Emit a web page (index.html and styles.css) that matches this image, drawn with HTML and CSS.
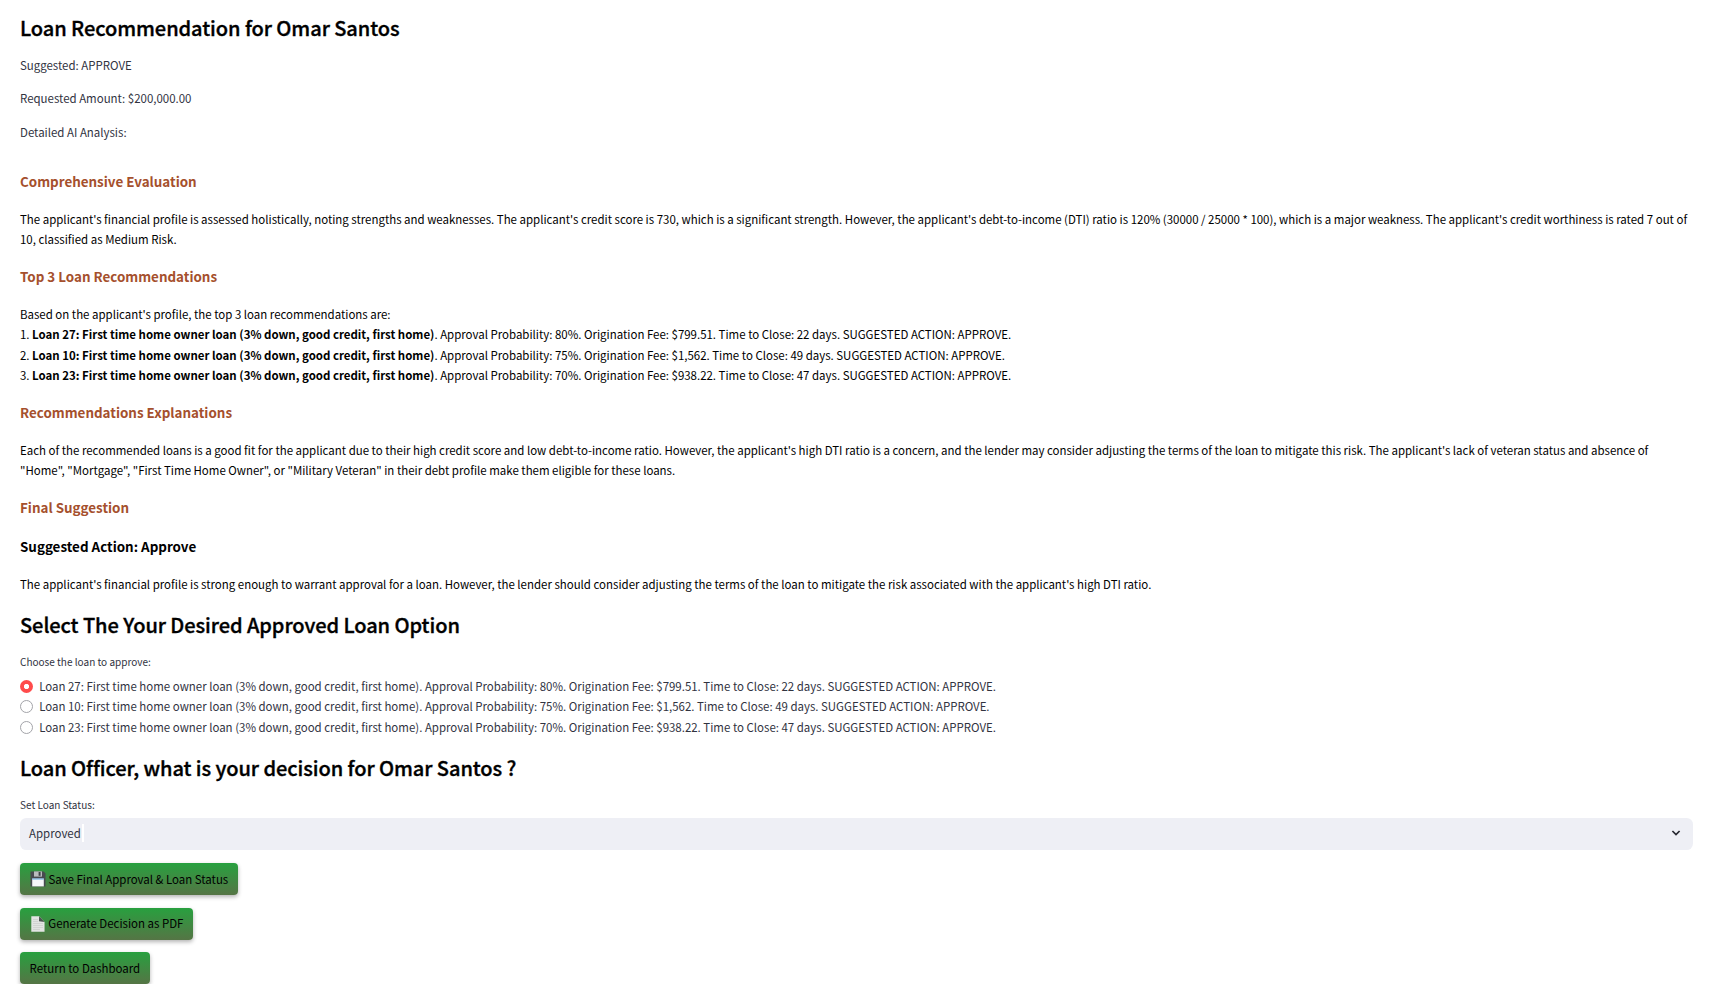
FILE: index.html
```html
<!DOCTYPE html>
<html lang="en">
<head>
<meta charset="utf-8">
<title>Loan Recommendation</title>
<link rel="stylesheet" href="styles.css">
</head>
<body>
<main class="page">
  <h2 class="title">Loan Recommendation for Omar Santos</h2>
  <div class="summary">
    <p>Suggested: APPROVE</p>
    <p>Requested Amount: $200,000.00</p>
    <p>Detailed AI Analysis:</p>
  </div>

  <section class="analysis">
    <h3 class="accent">Comprehensive Evaluation</h3>
    <p>The applicant's financial profile is assessed holistically, noting strengths and weaknesses. The applicant's credit score is 730, which is a significant strength. However, the applicant's debt-to-income (DTI) ratio is 120% (30000 / 25000 * 100), which is a major weakness. The applicant's credit worthiness is rated 7 out of 10, classified as Medium Risk.</p>
    <h3 class="accent">Top 3 Loan Recommendations</h3>
    <p>Based on the applicant's profile, the top 3 loan recommendations are:<br>
      1. <b>Loan 27: First time home owner loan (3% down, good credit, first home)</b>. Approval Probability: 80%. Origination Fee: $799.51. Time to Close: 22 days. SUGGESTED ACTION: APPROVE.<br>
      2. <b>Loan 10: First time home owner loan (3% down, good credit, first home)</b>. Approval Probability: 75%. Origination Fee: $1,562. Time to Close: 49 days. SUGGESTED ACTION: APPROVE.<br>
      3. <b>Loan 23: First time home owner loan (3% down, good credit, first home)</b>. Approval Probability: 70%. Origination Fee: $938.22. Time to Close: 47 days. SUGGESTED ACTION: APPROVE.</p>
    <h3 class="accent">Recommendations Explanations</h3>
    <p>Each of the recommended loans is a good fit for the applicant due to their high credit score and low debt-to-income ratio. However, the applicant's high DTI ratio is a concern, and the lender may consider adjusting the terms of the loan to mitigate this risk. The applicant's lack of veteran status and absence of "Home", "Mortgage", "First Time Home Owner", or "Military Veteran" in their debt profile make them eligible for these loans.</p>
    <h3 class="accent">Final Suggestion</h3>
    <h3>Suggested Action: Approve</h3>
    <p>The applicant's financial profile is strong enough to warrant approval for a loan. However, the lender should consider adjusting the terms of the loan to mitigate the risk associated with the applicant's high DTI ratio.</p>
  </section>

  <h2 class="title">Select The Your Desired Approved Loan Option</h2>
  <div class="label">Choose the loan to approve:</div>
  <div class="radios">
    <div class="radio"><span class="dot dot-on"></span>Loan 27: First time home owner loan (3% down, good credit, first home). Approval Probability: 80%. Origination Fee: $799.51. Time to Close: 22 days. SUGGESTED ACTION: APPROVE.</div>
    <div class="radio"><span class="dot"></span>Loan 10: First time home owner loan (3% down, good credit, first home). Approval Probability: 75%. Origination Fee: $1,562. Time to Close: 49 days. SUGGESTED ACTION: APPROVE.</div>
    <div class="radio"><span class="dot"></span>Loan 23: First time home owner loan (3% down, good credit, first home). Approval Probability: 70%. Origination Fee: $938.22. Time to Close: 47 days. SUGGESTED ACTION: APPROVE.</div>
  </div>

  <h2 class="title">Loan Officer, what is your decision for Omar Santos ?</h2>
  <div class="label">Set Loan Status:</div>
  <div class="select">
    <span>Approved</span><i class="input"></i>
    <svg class="chevron" width="10" height="6" viewBox="0 0 10 6"><path d="M1.4 1 5 4.6 8.6 1" fill="none" stroke="#262730" stroke-width="1.7"/></svg>
  </div>

  <div class="buttons">
    <button class="btn save">
      <svg class="icon" width="16" height="16" viewBox="0 0 16 16">
        <path d="M.8.4H13.6L15.5 2.3V15.6H.5V.7Z" fill="#484b50"/>
        <path d="M4 .4H12V5.6H4Z" fill="#b9bcbe"/>
        <path d="M8.6 1H10.6V4.8H8.6Z" fill="#3f4347"/>
        <path d="M2.2 7.6H13.8V15.4H2.2Z" fill="#f5f7f8"/>
        <path d="M2.2 7.4H13.8V8.6H2.2Z" fill="#79b4e2"/>
      </svg>Save Final Approval &amp; Loan Status
    </button>
    <button class="btn pdf">
      <svg class="icon" width="16" height="16" viewBox="0 0 16 16">
        <path d="M1.3.3H9.2L14.6 5.9V15.7H1.3Z" fill="#e3e4e3"/>
        <path d="M3 3.5H8M3 5.5H8M3 7.5H13M3 9.5H13M3 11.5H13M3 13.5H10" stroke="#c9cbc9" stroke-width=".7"/>
        <path d="M9.2.3 14.6 5.9 9 5.3Z" fill="#4c5350"/>
      </svg>Generate Decision as PDF
    </button>
    <button class="btn back">Return to Dashboard</button>
  </div>
</main>
</body>
</html>
```
FILE: styles.css
```css
* { box-sizing: border-box; }
body {
  margin: 0;
  background: #fff;
  color: #31333f;
  font: 11.465px/20.48px "Noto Sans CJK SC", "Noto Sans", sans-serif;
}
.page { padding: 15px 28px 0 20px; }
h2, h3, p { margin: 0; }

.title {
  color: #000;
  font-size: 20.05px;
  line-height: 26.88px;
  font-weight: 500;
  letter-spacing: -.07px;
  -webkit-text-stroke: .35px #000;
}
.summary { display: flex; flex-direction: column; gap: 12.8px; margin-top: 13.1px; }

.analysis {
  display: flex;
  flex-direction: column;
  gap: 15px;
  margin: 27px 0 19px;
  color: #000;
}
.analysis h3 { font-size: 13.4px; line-height: 24px; font-weight: 700; }
.analysis p { margin: .7px 0 -.7px; }
.analysis .accent { color: #a5502d; }

.label { margin-top: 13.4px; font-size: 10.03px; line-height: 18px; }
.radios { margin: 5.2px 0 18px; }
.radio { display: flex; align-items: center; }
.dot {
  width: 13px;
  height: 13px;
  margin-right: 6.2px;
  border: 1px solid #a3a4a9;
  border-radius: 50%;
}
.dot-on { border: 0; background: radial-gradient(circle, #fff 2.2px, #ff4b4b 3px); }

.select {
  display: flex;
  align-items: center;
  height: 32px;
  margin-top: 4.3px;
  padding: 0 12px 1px 9px;
  border-radius: 6.4px;
  background: #eeeff5;
}
.input { width: 2px; height: 18px; margin-left: 1.5px; background: #fff; }
.chevron { margin-left: auto; }

.buttons { display: flex; flex-direction: column; align-items: flex-start; gap: 12.7px; margin-top: 13.1px; }
.btn {
  display: flex;
  align-items: center;
  height: 32px;
  padding: 0 9.6px;
  border: 0;
  border-radius: 4px;
  background: linear-gradient(#28a03f, #557545);
  box-shadow: 0 2px 4px rgba(0, 0, 0, .3);
  color: #000;
  font: inherit;
  white-space: nowrap;
}
.icon { margin-right: 2.8px; }
.save { width: 218px; }
.pdf { width: 173px; }
.back { width: 130px; }
```
